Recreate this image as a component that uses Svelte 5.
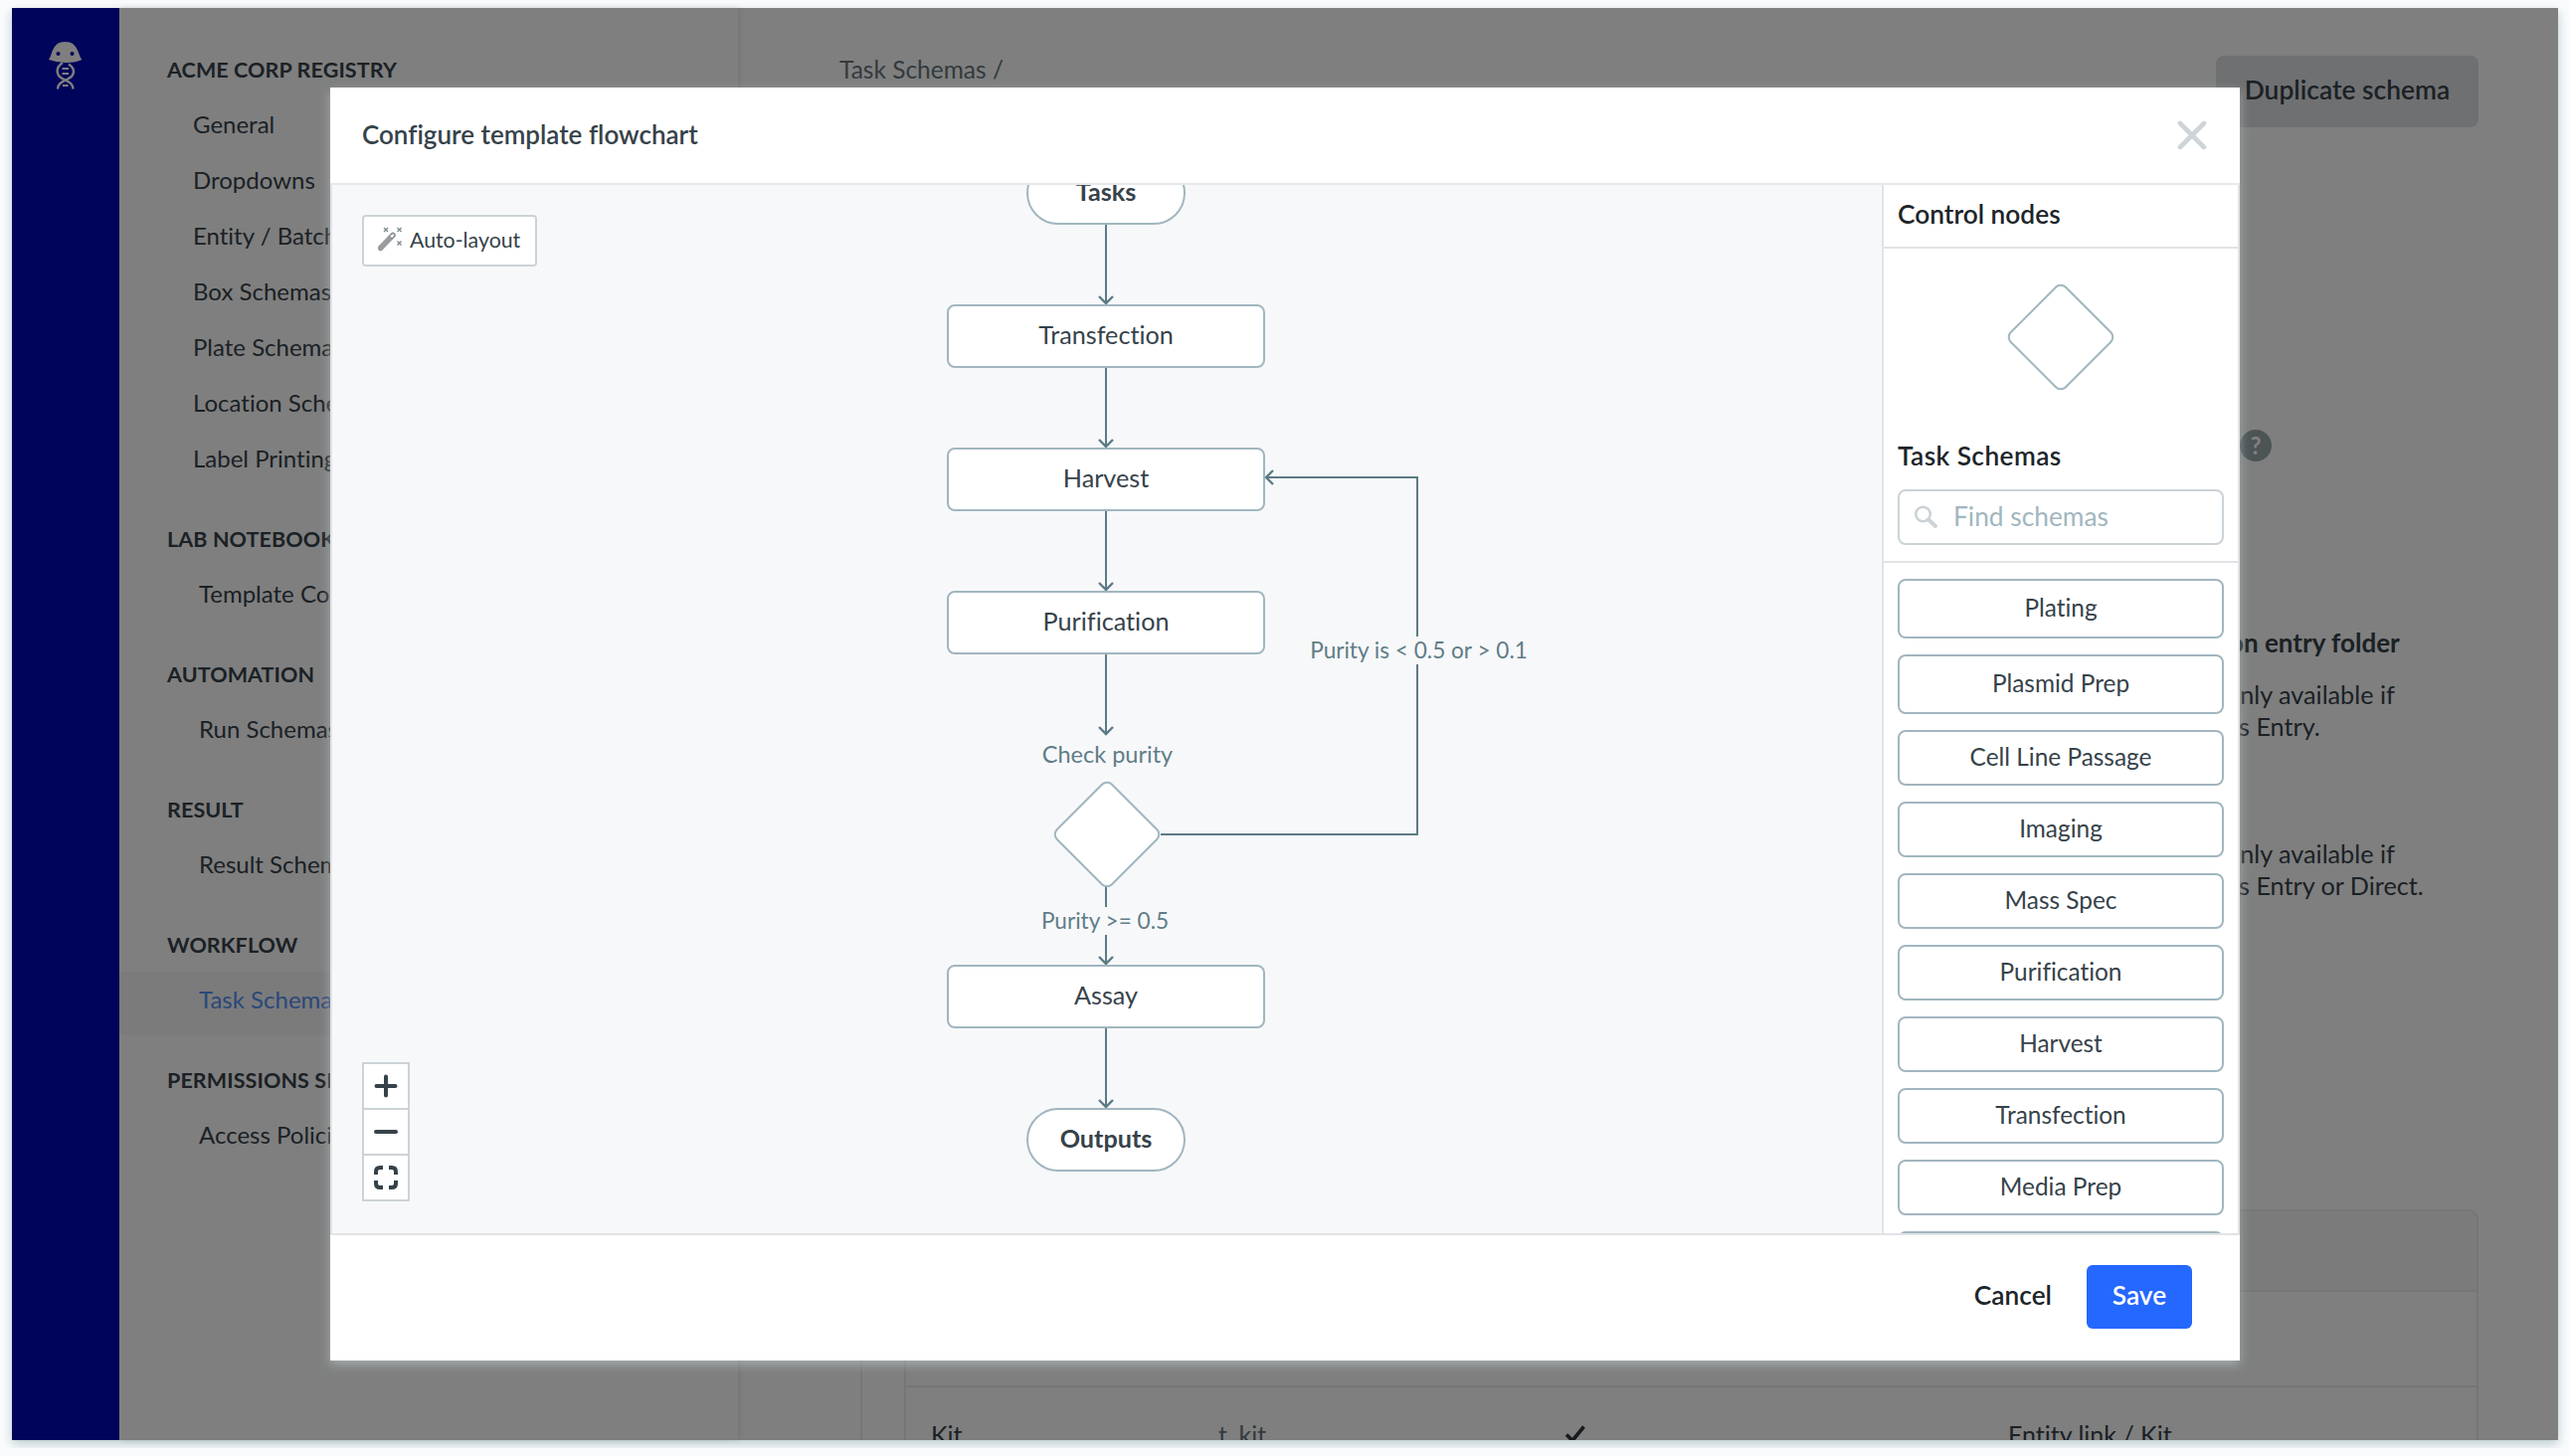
<script>
  const sections = [
    {
      title: 'ACME CORP REGISTRY',
      items: ['General', 'Dropdowns', 'Entity / Batch', 'Box Schemas', 'Plate Schemas', 'Location Schemas', 'Label Printing']
    },
    { title: 'LAB NOTEBOOK', nested: true, items: ['Template Collections'] },
    { title: 'AUTOMATION', nested: true, items: ['Run Schemas'] },
    { title: 'RESULT', nested: true, items: ['Result Schemas'] },
    { title: 'WORKFLOW', nested: true, items: ['Task Schemas'], active: true },
    { title: 'PERMISSIONS SETTINGS', nested: true, items: ['Access Policies'] }
  ];

  const schemas = [
    'Plating', 'Plasmid Prep', 'Cell Line Passage', 'Imaging', 'Mass Spec',
    'Purification', 'Harvest', 'Transfection', 'Media Prep', ''
  ];

  // Node and label positions are canvas coordinates.
  const nodes = [
    { label: 'Tasks', x: 698, y: -24, kind: 'terminal' },
    { label: 'Transfection', x: 618, y: 120, kind: 'task' },
    { label: 'Harvest', x: 618, y: 264, kind: 'task' },
    { label: 'Purification', x: 618, y: 408, kind: 'task' },
    { label: 'Assay', x: 618, y: 784, kind: 'task' },
    { label: 'Outputs', x: 698, y: 928, kind: 'terminal' }
  ];

  const labels = [
    { text: 'Check purity', x: 779.5, y: 573, kind: 'name' },
    { text: 'Purity >= 0.5', x: 777, y: 739.5, kind: 'condition' },
    { text: 'Purity is < 0.5 or > 0.1', x: 1092.5, y: 467.5, kind: 'condition' }
  ];

  const edges = [
    [40, 120],
    [184, 264],
    [328, 408],
    [472, 553],
    [705, 784],
    [848, 928]
  ];
</script>

<div class="frame">
  <nav class="rail">
    <svg class="logo" width="36" height="50" viewBox="0 0 36 50">
      <path d="M1 19C5 14 4 1 17.500 1S30 14 34.500 19Q27 22.500 17.500 22T1 19Z" fill="#fff" />
      <circle cx="10.500" cy="13" r="2" fill="#0008b4" />
      <circle cx="24.500" cy="13" r="2" fill="#0008b4" />
      <g fill="none" stroke="#fff" stroke-width="2.400">
        <path d="M15 22C7.500 27 8 35 15.500 38.500S25.500 44 25.500 48.500" />
        <path d="M21 23.500C28 28 27.500 35 20 38.500S10 44 10 48.500" />
        <path d="M14.500 28h6.500M14.500 33h6.500M15 45h5.500" stroke-width="2" />
      </g>
    </svg>
  </nav>

  <aside class="menu">
    {#each sections as section}
      <section class:nested={section.nested}>
        <h2>{section.title}</h2>
        <ul>
          {#each section.items as item}
            <li class:active={section.active}>{item}</li>
          {/each}
        </ul>
      </section>
    {/each}
  </aside>

  <main class="page">
    <header class="page-head">
      <div class="crumb">Task Schemas /</div>
      <div class="duplicate">Duplicate schema</div>
    </header>
    <div class="help-row"><span class="help">?</span></div>
    <div class="notes">
      <strong>on entry folder</strong>
      <p>only available if<br /><span class="second">is Entry.</span></p>
      <p>only available if<br /><span class="second">is Entry or Direct.</span></p>
    </div>
    <div class="table-wrap">
      <div class="table">
        <div class="tr th"></div>
        <div class="tr"></div>
        <div class="tr">
          <span>Kit</span>
          <span class="muted">t_kit</span>
          <span>
            <svg class="check" width="22" height="20" viewBox="0 0 22 20">
              <path d="M2 10.500L8 16.500L19.500 2.500" fill="none" stroke="#2c363c" stroke-width="3.600" />
            </svg>
          </span>
          <span>Entity link / Kit</span>
        </div>
      </div>
    </div>
  </main>

  <div class="overlay">
    <div class="modal">
      <header class="modal-head">
        <h1>Configure template flowchart</h1>
        <svg width="30" height="30" viewBox="0 0 30 30">
          <path d="M3 3L27 27M27 3L3 27" stroke="#cdd5d9" stroke-width="4.600" stroke-linecap="round" />
        </svg>
      </header>

      <div class="modal-body">
        <div class="canvas">
          <svg class="edges" width="1558" height="1054" viewBox="0 0 1558 1054">
            <g fill="none" stroke="#5b7b85" stroke-width="2">
              {#each edges as [from, to]}
                <path d="M778 {from}V{to}" />
                <path d="M771 {to - 8}L778 {to - 1}L785 {to - 8}" stroke-width="2.400" />
              {/each}
              <path d="M833 653H1091V294H939" />
              <path d="M946 287L939 294L946 301" stroke-width="2.400" />
            </g>
          </svg>

          {#each nodes as node}
            <div class="node {node.kind}" style="left:{node.x}px;top:{node.y}px">{node.label}</div>
          {/each}
          {#each labels as label}
            <div class="edge-label {label.kind}" style="left:{label.x}px;top:{label.y}px">{label.text}</div>
          {/each}
          <div class="diamond decision"></div>

          <div class="auto">
            <svg width="24" height="25" viewBox="0 0 24 25">
              <path d="M2.500 21.500L15 8.500" stroke="#999da0" stroke-width="5.500" stroke-linecap="round" />
              <path d="M11.500 9.500L14.500 6.500Q17 6.500 17 9L14 12Z" fill="#fff" stroke="#8c9396" stroke-width="1.300" />
              <path d="M6 1l4 4M10 1l-4 4M19.500 1l4 4M23.500 1l-4 4M19.500 14.500l4 4M23.500 14.500l-4 4" stroke="#7f8a8f" stroke-width="1.400" />
            </svg>
            <span>Auto-layout</span>
          </div>

          <div class="zoom">
            <div>
              <svg width="26" height="26" viewBox="0 0 26 26"><path d="M13 3.500V22.500M3.500 13H22.500" stroke="#36424a" stroke-width="4" stroke-linecap="round" /></svg>
            </div>
            <div>
              <svg width="26" height="26" viewBox="0 0 26 26"><path d="M3 13H23" stroke="#36424a" stroke-width="4" stroke-linecap="round" /></svg>
            </div>
            <div>
              <svg width="26" height="26" viewBox="0 0 26 26">
                <path d="M3 10V7Q3 3 7 3H10M16 3H19Q23 3 23 7V10M23 16V19Q23 23 19 23H16M10 23H7Q3 23 3 19V16" fill="none" stroke="#36424a" stroke-width="4" />
              </svg>
            </div>
          </div>
        </div>

        <aside class="palette">
          <h3 class="control">Control nodes</h3>
          <div class="shape"><div class="diamond"></div></div>
          <div class="finder">
            <h3 class="task-title">Task Schemas</h3>
            <div class="search">
              <svg width="25" height="25" viewBox="0 0 25 25" fill="none" stroke="#cbd3d7">
                <circle cx="9.500" cy="10" r="7.300" stroke-width="2.600" />
                <path d="M15 15.500L22 22" stroke-width="4" stroke-linecap="round" />
              </svg>
              <span>Find schemas</span>
            </div>
          </div>
          <div class="schemas">
            {#each schemas as name, i}
              <div class="schema" class:tall={i < 2}>{name}</div>
            {/each}
          </div>
        </aside>
      </div>

      <footer class="modal-foot">
        <span class="cancel">Cancel</span>
        <span class="save">Save</span>
      </footer>
    </div>
  </div>
</div>

<style>
  :global(body) {
    background: #fafbfd;
    overflow: hidden;
  }
  .frame,
  .frame * {
    box-sizing: border-box;
  }
  h1, h2, h3, p, ul {
    margin: 0;
    padding: 0;
    list-style: none;
  }
  .frame {
    position: relative;
    display: flex;
    width: 2560px;
    height: 1440px;
    margin: 8px 12px;
    background: #fff;
    color: #36424a;
    font-family: Lato, 'Open Sans', sans-serif;
    font-size: 24px;
    font-variant-ligatures: none;
    white-space: nowrap;
    box-shadow: 0 4px 10px #b9cbca;
  }

  /* Page behind the dialog */
  .rail {
    display: flex;
    flex: none;
    justify-content: center;
    width: 108px;
    padding-top: 33px;
    background: #0008b4;
  }
  .menu {
    flex: none;
    width: 622px;
    padding-top: 33px;
    box-shadow: 1px 0 6px #0000001c;
  }
  .menu section {
    margin-bottom: 24px;
  }
  .menu h2 {
    height: 56px;
    padding-left: 48px;
    font-size: 21.500px;
    font-weight: 700;
    line-height: 58px;
    letter-spacing: 0.100px;
  }
  .menu li {
    padding-left: 74px;
    font-size: 24px;
    line-height: 56px;
  }
  .menu .nested li {
    padding-left: 80px;
  }
  .menu li.active {
    height: 64px;
    margin-bottom: -8px;
    background: #f7f7f8;
    color: #5590f2;
  }
  .page {
    flex: 1;
    display: flex;
    flex-direction: column;
    overflow: hidden;
    height: 1440px;
    padding: 48px 80px 0 102px;
  }
  .page-head {
    display: flex;
    flex: none;
    justify-content: space-between;
    height: 72px;
  }
  .crumb {
    color: #66757c;
    font-size: 24.500px;
    line-height: 27px;
  }
  .duplicate {
    width: 264px;
    height: 72px;
    border-radius: 8px;
    background: #dfe1e4;
    font-size: 26.400px;
    font-weight: 600;
    line-height: 69px;
    text-align: center;
  }
  .help-row {
    display: flex;
    flex: none;
    justify-content: flex-end;
    margin: 304px 208px 0 0;
  }
  .help {
    width: 32px;
    height: 32px;
    border-radius: 50%;
    background: #9aa8ad;
    color: #fff;
    font-weight: 700;
    line-height: 31px;
    text-align: center;
  }
  .notes {
    flex: none;
    align-self: flex-end;
    width: 260px;
    height: 752px;
    padding-top: 166px;
    font-size: 25.200px;
    line-height: 32px;
  }
  .notes strong {
    display: block;
    margin: 0 0 20px 9px;
    font-size: 26px;
  }
  .notes p {
    margin: 0 0 96px 6px;
  }
  .second {
    margin-left: 7px;
  }
  .table-wrap {
    flex: none;
    height: 300px;
    margin-left: 21px;
    border-left: 2px solid #efeff0;
    padding-left: 42px;
  }
  .table {
    border: 2px solid #ececee;
    border-radius: 10px 10px 0 0;
    overflow: hidden;
  }
  .tr {
    display: grid;
    grid-template-columns: 289px 348px 446px 1fr;
    align-items: center;
    height: 96px;
    padding-left: 25px;
    border-bottom: 2px solid #ececee;
    font-size: 25px;
  }
  .th {
    height: 81px;
    background: #f6f6f7;
  }
  .muted {
    color: #66757c;
  }
  .check {
    display: block;
  }

  /* Dialog */
  .overlay {
    position: absolute;
    inset: 0;
    padding: 80px 320px;
    background: rgba(0, 0, 0, 0.5);
  }
  .modal {
    display: flex;
    flex-direction: column;
    width: 1920px;
    height: 1280px;
    background: #fff;
    box-shadow: 0 4px 10px #b9c4c4aa;
  }
  .modal-head {
    display: flex;
    align-items: center;
    justify-content: space-between;
    height: 98px;
    padding: 0 33px 0 32px;
    border-bottom: 2px solid #e6e8eb;
  }
  h1 {
    padding-bottom: 3px;
    font-size: 26px;
    font-weight: 600;
  }
  .modal-body {
    display: flex;
    height: 1054px;
    border: solid #e1e3e6;
    border-width: 0 2px;
  }
  .canvas {
    position: relative;
    width: 1558px;
    overflow: hidden;
    background: #f7f8fa;
  }
  .edges {
    display: block;
  }
  .node {
    position: absolute;
    display: flex;
    align-items: center;
    justify-content: center;
    width: 320px;
    height: 64px;
    padding-bottom: 4px;
    border: 2px solid #a1b6bf;
    border-radius: 8px;
    background: #fff;
    font-size: 25.200px;
  }
  .terminal {
    width: 160px;
    border-radius: 32px;
    font-weight: 700;
  }
  .edge-label {
    position: absolute;
    height: 28px;
    padding: 0 4px;
    background: #f7f8fa;
    color: #5f7d87;
    font-size: 22.600px;
    line-height: 27px;
    transform: translate(-50%, -50%);
  }
  .edge-label.name {
    font-size: 23.500px;
  }
  .diamond {
    width: 80px;
    height: 80px;
    border: 2px solid #a1b6bf;
    border-radius: 8px;
    background: #fff;
    transform: rotate(45deg);
  }
  .decision {
    position: absolute;
    left: 738.500px;
    top: 612.500px;
  }
  .auto {
    position: absolute;
    left: 30px;
    top: 30px;
    display: flex;
    align-items: center;
    gap: 8px;
    width: 176px;
    height: 52px;
    padding: 0 0 3px 14px;
    border: 2px solid #cbd3d7;
    border-radius: 4px;
    background: #fff;
    font-size: 21.300px;
  }
  .zoom {
    position: absolute;
    left: 30px;
    bottom: 32px;
    width: 48px;
    border: solid #cbd3d7;
    border-width: 2px 2px 0;
    background: #fff;
  }
  .zoom div {
    display: flex;
    align-items: center;
    justify-content: center;
    height: 46px;
    border-bottom: 2px solid #cbd3d7;
  }
  .palette {
    flex: 1;
    overflow: hidden;
    border-left: 2px solid #e1e3e6;
  }
  h3 {
    color: #1d252a;
    font-size: 26.300px;
    font-weight: 600;
    line-height: 32px;
  }
  .control {
    height: 64px;
    padding: 13px 14px 0;
    border-bottom: 2px solid #e1e3e6;
  }
  .task-title {
    letter-spacing: 0.400px;
  }
  .shape {
    display: flex;
    justify-content: center;
    height: 192px;
    padding-top: 48.500px;
  }
  .finder {
    height: 124px;
    padding: 0 14px;
    border-bottom: 2px solid #e1e3e6;
  }
  .search {
    display: flex;
    align-items: center;
    gap: 15px;
    height: 56px;
    margin-top: 18px;
    padding: 0 0 2px 14px;
    border: 2px solid #cbd3d7;
    border-radius: 8px;
    color: #a1b6bf;
    font-size: 26.300px;
  }
  .schemas {
    display: flex;
    flex-direction: column;
    gap: 16px;
    padding: 16px 14px;
  }
  .schema {
    flex: none;
    height: 56px;
    border: 2px solid #a1b6bf;
    border-radius: 8px;
    font-size: 24.400px;
    line-height: 50px;
    text-align: center;
  }
  .tall {
    height: 60px;
    line-height: 54px;
  }
  .modal-foot {
    display: flex;
    align-items: center;
    justify-content: flex-end;
    gap: 35px;
    height: 128px;
    padding: 0 48px 2px 0;
    border-top: 2px solid #e1e3e6;
    font-size: 26.300px;
    font-weight: 600;
  }
  .cancel {
    padding-bottom: 4px;
    color: #1d252a;
  }
  .save {
    width: 106px;
    height: 64px;
    border-radius: 6px;
    background: #2568ff;
    color: #fff;
    line-height: 60px;
    text-align: center;
  }
</style>
